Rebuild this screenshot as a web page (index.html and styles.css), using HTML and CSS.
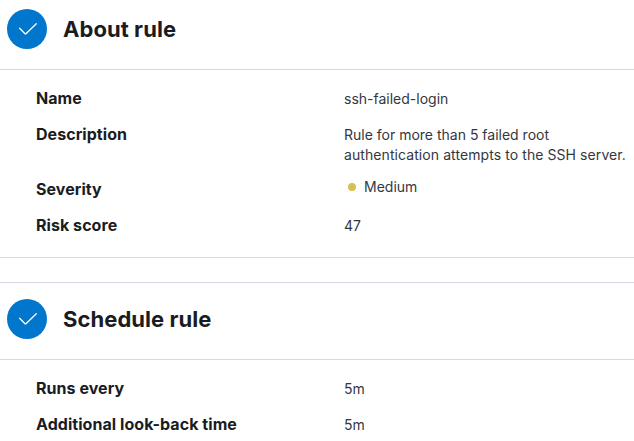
FILE: index.html
```html
<!DOCTYPE html>
<html lang="en">
<head>
<meta charset="utf-8">
<title>Rule</title>
<link rel="stylesheet" href="styles.css">
</head>
<body>
<section class="panel">
  <header class="panel-header">
    <span class="step"><svg viewBox="0 0 40 40" width="40" height="40"><path d="M12.6 19.2l5.200 5.300a1 1 0 0 0 1.400 0L29.300 14.700"/></svg></span>
    <h2>About rule</h2>
  </header>
  <dl class="list">
    <dt>Name</dt><dd>ssh-failed-login</dd>
    <dt>Description</dt><dd>Rule for more than 5 failed root <span class="spaced">authentication attempts to the SSH server.</span></dd>
    <dt>Severity</dt><dd class="health"><span class="dot"></span>Medium</dd>
    <dt>Risk score</dt><dd>47</dd>
  </dl>
</section>
<section class="panel">
  <header class="panel-header">
    <span class="step"><svg viewBox="0 0 40 40" width="40" height="40"><path d="M12.6 19.2l5.200 5.300a1 1 0 0 0 1.400 0L29.300 14.700"/></svg></span>
    <h2>Schedule rule</h2>
  </header>
  <dl class="list">
    <dt>Runs every</dt><dd>5m</dd>
    <dt>Additional look-back time</dt><dd>5m</dd>
  </dl>
</section>
</body>
</html>
```
FILE: styles.css
```css
body {
  margin: 0;
  height: 441px;
  overflow: hidden;
  background: #fff;
  color: #343741;
  font: 14px/20px Inter, sans-serif;
}
.panel { border-bottom: 1px solid #d3dae6; }
.panel + .panel { margin-top: 24px; border-top: 1px solid #d3dae6; }
.panel-header {
  display: flex;
  align-items: center;
  gap: 16px;
  height: 40px;
  padding: 9px 7px 20px;
  border-bottom: 1px solid #d3dae6;
}
.panel + .panel .panel-header { padding-top: 16px; }
.step { width: 40px; height: 40px; border-radius: 50%; background: #0077cc; }
.step svg { display: block; fill: none; stroke: #fff; stroke-width: 1.3; stroke-linecap: round; stroke-linejoin: round; }
h2 { margin: 0; font-size: 22px; line-height: 32px; font-weight: 700; letter-spacing: 0.06px; color: #1a1c21; }
.list {
  display: grid;
  grid-template-columns: 308px 286px;
  row-gap: 12px;
  margin: 0;
  padding: 16px 0 20px 36px;
}
dt { font-size: 16px; line-height: 24px; font-weight: 700; letter-spacing: 0.05px; color: #1a1c21; }
dd { margin: 0; padding-top: 3px; }
.spaced { letter-spacing: 0.08px; }
.health { display: flex; align-items: center; height: 20px; padding: 0 0 0 4px; }
.dot { width: 8px; height: 8px; margin-right: 8px; border-radius: 50%; background: #d6bf57; }
```
